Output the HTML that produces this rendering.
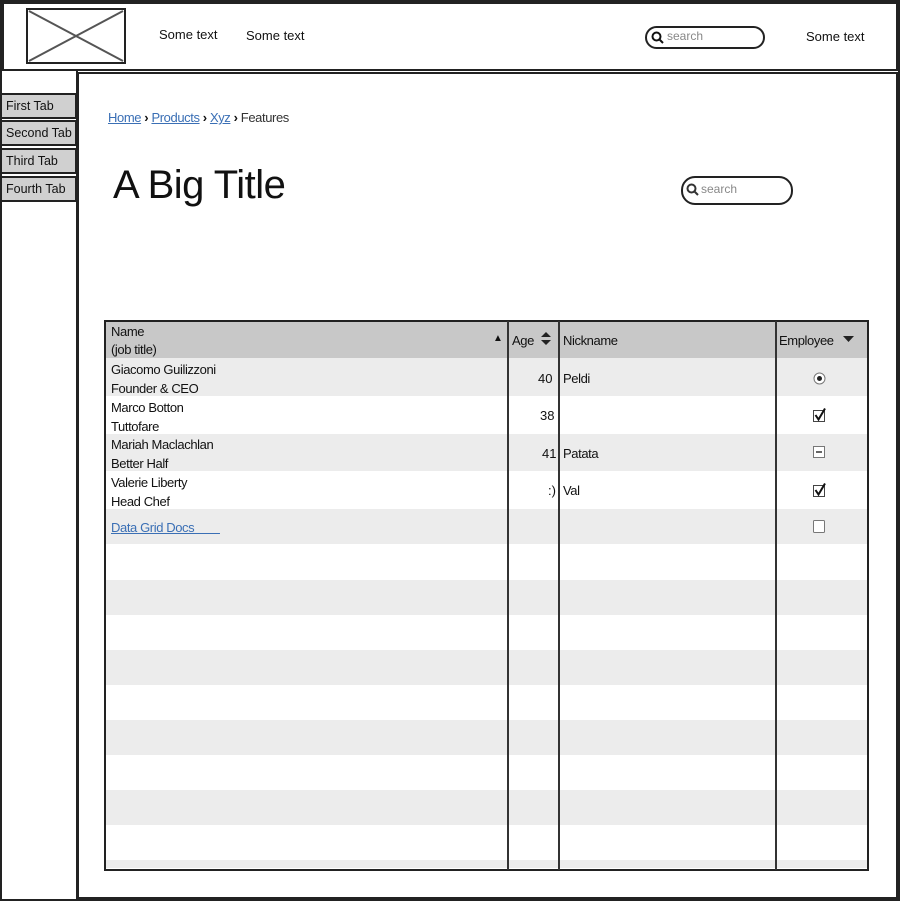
<!DOCTYPE html>
<html><head><meta charset="utf-8"><style>
*{margin:0;padding:0;box-sizing:border-box}
body{width:900px;height:901px;position:relative;background:#fff;font-family:"Liberation Sans",sans-serif;color:#111;overflow:hidden}
.a{position:absolute}
.t{font-size:13px;white-space:nowrap}
.tb{letter-spacing:-0.4px}
.tab{position:absolute;left:2px;width:75px;height:26px;background:#d0d0d0;border:2px solid #222;border-left:none;font-size:12.5px;padding:4px 0 0 4px}
.row{position:absolute;left:106px;width:761px}
.g{background:#ececec}
.link{color:#3a6fb5;text-decoration:underline}
</style></head><body>
<div class="a" style="left:0;top:0;width:900px;height:901px;border:2px solid #222"></div>
<div class="a" style="left:2px;top:2px;width:896px;height:69px;border:2px solid #222"></div>
<svg class="a" style="left:26px;top:8px" width="100" height="56"><rect x="1" y="1" width="98" height="54" fill="#fff" stroke="#222" stroke-width="2"/><path d="M3 3L97 53M97 3L3 53" stroke="#555" stroke-width="2"/></svg>
<div class="a t" style="left:159px;top:27px">Some text</div>
<div class="a t" style="left:246px;top:28px">Some text</div>
<div class="a" style="left:645px;top:26px;width:120px;height:23px;border:2px solid #222;border-radius:12px"></div>
<svg class="a" style="left:651px;top:31px" width="14" height="14"><circle cx="5.5" cy="5.5" r="4" fill="none" stroke="#111" stroke-width="2"/><path d="M8.5 8.5L12 12" stroke="#111" stroke-width="2"/></svg>
<div class="a t" style="left:667px;top:29px;color:#888;font-size:12px">search</div>
<div class="a t" style="left:806px;top:29px">Some text</div>
<div class="a" style="left:76px;top:70px;width:2px;height:830px;background:#222"></div>
<div class="a" style="left:77px;top:72px;width:821px;height:827px;border:2px solid #222"></div>
<div class="tab" style="top:93px">First Tab</div>
<div class="tab" style="top:120px">Second Tab</div>
<div class="tab" style="top:148px">Third Tab</div>
<div class="tab" style="top:176px">Fourth Tab</div>
<div class="a t tb" style="left:108px;top:110px;font-size:13px"><span class="link">Home</span> <b>›</b> <span class="link">Products</span> <b>›</b> <span class="link">Xyz</span> <b>›</b> <span style="color:#333">Features</span></div>
<div class="a" style="left:113px;top:163px;font-size:40px;white-space:nowrap;letter-spacing:-0.5px">A Big Title</div>
<div class="a" style="left:681px;top:176px;width:112px;height:29px;border:2px solid #222;border-radius:14px"></div>
<svg class="a" style="left:686px;top:183px" width="14" height="14"><circle cx="5.5" cy="5.5" r="4" fill="none" stroke="#333" stroke-width="2"/><path d="M8.5 8.5L12 12" stroke="#333" stroke-width="2"/></svg>
<div class="a t" style="left:701px;top:182px;color:#888;font-size:12px">search</div>
<!-- table -->
<div class="row" style="top:322px;height:36px;background:#c8c8c8"></div>
<div class="row g" style="top:358px;height:38px"></div>
<div class="row g" style="top:434px;height:37px"></div>
<div class="row g" style="top:509px;height:35px"></div>
<div class="row g" style="top:580px;height:35px"></div>
<div class="row g" style="top:650px;height:35px"></div>
<div class="row g" style="top:720px;height:35px"></div>
<div class="row g" style="top:790px;height:35px"></div>
<div class="row g" style="top:860px;height:8px"></div>
<div class="a" style="left:104px;top:320px;width:765px;height:551px;border:2px solid #222"></div>
<div class="a" style="left:507px;top:321px;width:2px;height:549px;background:#333"></div>
<div class="a" style="left:558px;top:321px;width:2px;height:549px;background:#333"></div>
<div class="a" style="left:775px;top:321px;width:2px;height:549px;background:#333"></div>
<div class="a t tb" style="left:111px;top:323px;line-height:18px">Name<br>(job title)</div>
<div class="a t" style="left:493px;top:333px;font-size:10px">▲</div>
<div class="a t tb" style="left:512px;top:333px">Age</div>
<svg class="a" style="left:541px;top:331px" width="10" height="15"><path d="M0 6L5 1L10 6ZM0 9L5 14L10 9Z" fill="#222"/></svg>
<div class="a t tb" style="left:563px;top:333px">Nickname</div>
<div class="a t tb" style="left:779px;top:333px">Employee</div>
<svg class="a" style="left:843px;top:336px" width="11" height="7"><path d="M0 0H11L5.5 6Z" fill="#222"/></svg>
<div class="a t tb" style="left:111px;top:361px;line-height:18.5px">Giacomo Guilizzoni<br>Founder &amp; CEO</div>
<div class="a t tb" style="left:111px;top:399px;line-height:18.5px">Marco Botton<br>Tuttofare</div>
<div class="a t tb" style="left:111px;top:436px;line-height:18.5px">Mariah Maclachlan<br>Better Half</div>
<div class="a t tb" style="left:111px;top:474px;line-height:18.5px">Valerie Liberty<br>Head Chef</div>
<div class="a t tb link" style="left:111px;top:520px">Data Grid Docs&nbsp;&nbsp;&nbsp;&nbsp;&nbsp;&nbsp;&nbsp;&nbsp;</div>
<div class="a t" style="left:538px;top:371px">40</div><div class="a t tb" style="left:563px;top:371px">Peldi</div>
<div class="a t" style="left:540px;top:408px">38</div>
<div class="a t" style="left:542px;top:446px">41</div><div class="a t tb" style="left:563px;top:446px">Patata</div>
<div class="a t" style="left:548px;top:483px">:)</div><div class="a t tb" style="left:563px;top:483px">Val</div>
<svg class="a" style="left:813px;top:372px" width="13" height="13"><circle cx="6.5" cy="6.5" r="5.5" fill="#fff" stroke="#777"/><circle cx="6.5" cy="6.5" r="2.5" fill="#222"/></svg>
<svg class="a" style="left:812px;top:407px" width="16" height="16"><rect x="1.5" y="3.5" width="11" height="11" fill="#fff" stroke="#444"/><path d="M3.5 8L6.5 12.5L13 1.5" fill="none" stroke="#111" stroke-width="2"/></svg>
<svg class="a" style="left:813px;top:446px" width="13" height="13"><rect x="0.5" y="0.5" width="11" height="11" fill="#fff" stroke="#777"/><path d="M3 6H9" stroke="#333" stroke-width="1.5"/></svg>
<svg class="a" style="left:812px;top:482px" width="16" height="16"><rect x="1.5" y="3.5" width="11" height="11" fill="#fff" stroke="#444"/><path d="M3.5 8L6.5 12.5L13 1.5" fill="none" stroke="#111" stroke-width="2"/></svg>
<svg class="a" style="left:813px;top:520px" width="13" height="14"><rect x="0.5" y="0.5" width="11" height="12" rx="1" fill="#fff" stroke="#777"/></svg>
</body></html>
